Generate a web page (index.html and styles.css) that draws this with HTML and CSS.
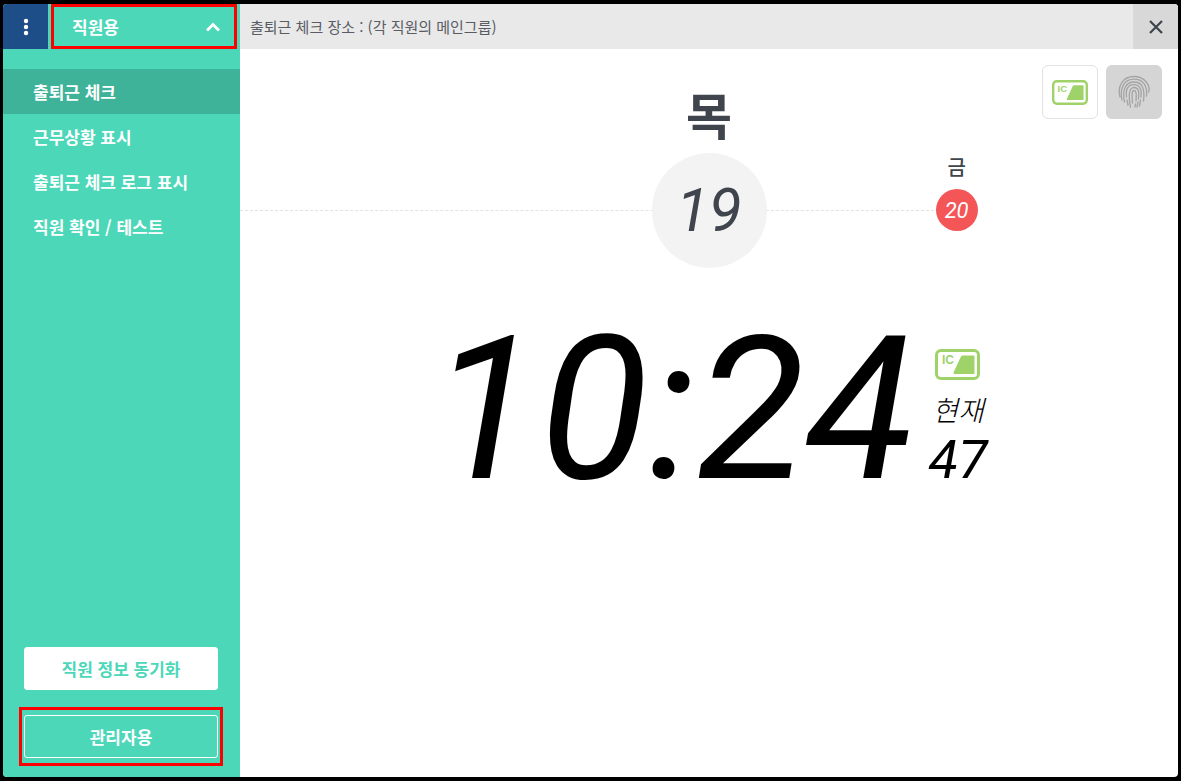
FILE: index.html
```
<!DOCTYPE html>
<html lang="ko">
    <head>
        <meta charset="UTF-8" />
        <meta name="viewport" content="width=device-width, initial-scale=1.0" />
        <title>출퇴근 체크</title>
        <link rel="stylesheet" href="styles.css">
    </head>
    <body>
        <div class="app">
            <aside class="sidebar">
                <div class="sidebar-head">
                    <button class="more" aria-label="메뉴">
                        <svg width="6" height="18" viewBox="0 0 6 18" fill="#fff">
                            <circle cx="3" cy="3" r="2.2" />
                            <circle cx="3" cy="9" r="2.2" />
                            <circle cx="3" cy="15" r="2.2" />
                        </svg>
                    </button>
                    <button class="mode">
                        직원용
                        <svg width="14" height="10" viewBox="0 0 14 10" fill="none" stroke="#fff" stroke-width="3">
                            <path d="M1 8.5l6-6 6 6" />
                        </svg>
                    </button>
                </div>
                <nav class="menu">
                    <a class="active" href="#">출퇴근 체크</a>
                    <a href="#">근무상황 표시</a>
                    <a href="#">출퇴근 체크 로그 표시</a>
                    <a href="#">직원 확인 / 테스트</a>
                </nav>
                <div class="actions">
                    <button class="btn btn-sync">직원 정보 동기화</button>
                    <div class="marked">
                        <button class="btn btn-admin">관리자용</button>
                    </div>
                </div>
            </aside>
            <main class="main">
                <header class="topbar">
                    <span>출퇴근 체크 장소 : (각 직원의 메인그룹)</span>
                    <button class="close" aria-label="닫기">
                        <svg width="14" height="14" viewBox="0 0 14 14" fill="none" stroke="#3f444d" stroke-width="2.2">
                            <path d="M1 1l12 12M13 1L1 13" />
                        </svg>
                    </button>
                </header>
                <section class="overview">
                    <div class="calendar">
                        <div class="day today">
                            <span class="weekday">목</span>
                            <span class="date">19</span>
                        </div>
                        <div class="day next">
                            <span class="weekday">금</span>
                            <span class="date">20</span>
                        </div>
                    </div>
                    <div class="devices">
                        <button class="device" aria-label="IC 카드">
                            <svg class="ic-card" width="36" height="25" viewBox="0 0 45 31">
                                <rect x="1.5" y="1.5" width="42" height="28" rx="4.5" />
                                <path d="M27.5 6.5h11a1 1 0 0 1 1 1v16.5a1 1 0 0 1-1 1H19.5a1 1 0 0 1-1-1.5l7.5-16a2 2 0 0 1 1.5-1z" />
                                <text x="7" y="15">IC</text>
                            </svg>
                        </button>
                        <button class="device off" aria-label="지문">
                            <svg width="32" height="34" viewBox="0 0 32 34" fill="none" stroke="#a4a4a4" stroke-width="1.3" stroke-linecap="round">
                                <path d="M2 22C-1 11 5 1.5 16 1.5S33 11 30.5 17" />
                                <path d="M4 25C1.5 13 6 4.2 16 4.2S29.5 12 28.5 21" />
                                <path d="M6.5 27C4 15 7.5 7 16 7s11 7 9.5 19" />
                                <path d="M8.5 22C7.5 14 10 9.7 16 9.7S24 15 23 22M9 25l1 5M22.5 25l-1 6" />
                                <path d="M12.5 32c-2-10-2-19.5 3.5-19.5S21 18 20.5 24M20 27l-1 5" />
                                <path d="M14.5 28c-.5-6-1-12.5 1.5-12.5S18.5 20 18 26M17.5 29l-.5 3" />
                            </svg>
                        </button>
                    </div>
                </section>
                <section class="clock">
                    <time class="time">10:24</time>
                    <div class="now">
                        <svg class="ic-card" width="45" height="31" viewBox="0 0 45 31">
                            <rect x="1.5" y="1.5" width="42" height="28" rx="4.5" />
                            <path d="M27.5 6.5h11a1 1 0 0 1 1 1v16.5a1 1 0 0 1-1 1H19.5a1 1 0 0 1-1-1.5l7.5-16a2 2 0 0 1 1.5-1z" />
                            <text x="7" y="15">IC</text>
                        </svg>
                        <span class="now-label">현재</span>
                        <span class="seconds">47</span>
                    </div>
                </section>
            </main>
        </div>
    </body>
</html>
```
FILE: styles.css
```
* {
    box-sizing: border-box;
    margin: 0;
    padding: 0;
}
body {
    min-height: 100vh;
    padding: 4px 3px;
    display: flex;
    background: #000;
    color: #3f444d;
    font-family: "Noto Sans CJK KR", sans-serif;
    font-size: 15px;
}
button {
    border: none;
    background: none;
    color: inherit;
    font: inherit;
    cursor: pointer;
}
a {
    color: inherit;
    text-decoration: none;
}
svg {
    display: block;
}
.app {
    flex: 1;
    display: flex;
    border-radius: 4px;
    overflow: hidden;
    background: #fff;
}

/* 사이드바 */
.sidebar {
    flex: none;
    width: 237px;
    display: flex;
    flex-direction: column;
    background: #4cd7b9;
    color: #fff;
    font-size: 17px;
    font-weight: 700;
}
.sidebar-head {
    display: flex;
    height: 45px;
}
.more {
    width: 45px;
    display: grid;
    place-items: center;
    background: #1e4e88;
}
.mode {
    flex: 1;
    margin: 0 3px;
    padding: 0 14px 0 18px;
    display: flex;
    align-items: center;
    justify-content: space-between;
    border: 3px solid #f00;
}
.menu {
    padding-top: 20px;
}
.menu a {
    display: block;
    padding-left: 30px;
    line-height: 45px;
}
.menu .active {
    background: #3eb399;
}
.actions {
    margin-top: auto;
    padding: 0 17px 11px 16px;
    display: flex;
    flex-direction: column;
    gap: 17px;
}
.btn {
    height: 43px;
    border: 1px solid #fff;
    border-radius: 3px;
}
.btn-sync {
    margin: 0 5px;
    background: #fff;
    color: #4cd7b9;
}
.marked {
    padding: 5px 2px;
    border: 3px solid #f00;
}
.btn-admin {
    width: 100%;
}

/* 본문 */
.main {
    flex: 1;
    min-width: 0;
}
.topbar {
    display: flex;
    align-items: center;
    justify-content: space-between;
    height: 45px;
    padding-left: 10px;
    background: #e9e9e9;
    color: #585c64;
}
.close {
    width: 45px;
    height: 100%;
    display: grid;
    place-items: center;
    background: #d8d8d8;
}
.overview {
    display: grid;
}
.calendar,
.devices {
    grid-area: 1 / 1;
}
.devices {
    z-index: 1;
    justify-self: end;
    align-self: start;
    display: flex;
    gap: 8px;
    padding: 16px;
}
.device {
    width: 56px;
    height: 54px;
    display: grid;
    place-items: center;
    border: 1px solid #e2e2e2;
    border-radius: 6px;
    background: #fff;
}
.device.off {
    border-color: #d5d5d5;
    background: #d5d5d5;
}
.ic-card {
    fill: #9fd36a;
    font: 700 12px "Liberation Sans", sans-serif;
}
.ic-card rect {
    fill: #fff;
    stroke: #9fd36a;
    stroke-width: 3px;
}
.calendar {
    position: relative;
    display: grid;
    grid-template-columns: repeat(3, 26.4%);
    justify-content: center;
    padding-top: 34px;
}
.calendar::before {
    content: "";
    position: absolute;
    left: 0;
    bottom: 57px;
    width: 75%;
    border-top: 1px dashed #e2e2e2;
}
.day {
    position: relative;
    display: flex;
    flex-direction: column;
    align-items: center;
    justify-content: flex-end;
    gap: 10px;
}
.date {
    display: grid;
    place-items: center;
    border-radius: 50%;
    font-family: Roboto, sans-serif;
    font-style: italic;
}
.today {
    grid-column: 2;
}
.today .weekday {
    font-size: 50px;
    font-weight: 700;
    line-height: 60px;
}
.today .date {
    width: 115px;
    height: 115px;
    background: #f3f3f3;
    font-size: 60px;
}
.next {
    padding-bottom: 37px;
}
.next .weekday {
    font-size: 20px;
    font-weight: 500;
    line-height: 24px;
}
.next .date {
    width: 42px;
    height: 42px;
    background: #f45557;
    color: #fff;
    font-size: 22px;
}
.clock {
    display: flex;
    align-items: flex-end;
    justify-content: center;
    gap: 14px;
    margin-top: 42px;
    color: #000;
    font-family: Roboto, "Noto Sans CJK KR", sans-serif;
    font-style: italic;
}
.time {
    font-size: 200px;
    line-height: 200px;
}
.now {
    display: flex;
    flex-direction: column;
    align-items: center;
    padding-bottom: 24px;
}
.now-label {
    margin-top: 16px;
    font-size: 28px;
    font-weight: 300;
    line-height: 32px;
}
.seconds {
    margin-top: 6px;
    font-size: 54px;
    line-height: 52px;
}
```
